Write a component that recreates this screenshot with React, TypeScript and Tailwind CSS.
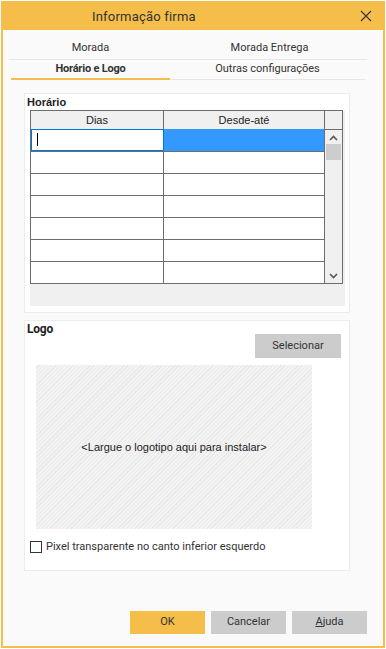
import React from "react";

export default function App() {
  const rows = [0, 1, 2, 3, 4, 5, 6];
  return (
    <div className="w-[386px] h-[649px] bg-white relative" style={{ fontFamily: "Roboto, 'Noto Sans', sans-serif" }}>
      <div className="absolute left-[1px] top-[1px] w-[384px] h-[647px] border-2 border-[#f5bd4a] bg-[#fafafa] flex flex-col">
        {/* Title bar */}
        <div className="h-[29px] -mt-[2px] bg-[#f5bd4a] relative flex items-center shrink-0">
          <div className="pl-[89px] pt-[2px] text-[13px] text-[#333] tracking-[0.2px]">Informação firma</div>
          <svg className="absolute left-[357px] top-[9px]" width="12" height="12" viewBox="0 0 12 12">
            <path d="M1 1 L11 11 M11 1 L1 11" stroke="#333" strokeWidth="1.1" />
          </svg>
        </div>
        {/* Tabs */}
        <div className="ml-[6px] w-[358px] mt-[7px] text-[11px] text-[#333]">
          <div className="flex h-[22px] items-center pt-[1px]">
            <div className="w-[163px] text-center">Morada</div>
            <div className="w-[195px] text-center">Morada Entrega</div>
          </div>
          <div className="h-px bg-[#e6e6e6]" />
          <div className="flex h-[18px] items-center ml-[2px]">
            <div className="w-[159px] text-center font-bold tracking-[-0.2px]">Horário e Logo</div>
            <div className="w-[195px] text-center">Outras configurações</div>
          </div>
          <div className="flex ml-[2px] items-center h-[2px]">
            <div className="w-[159px] h-[2px] bg-[#f5bd4a]" />
            <div className="w-[195px] h-px bg-[#e6e6e6]" />
          </div>
        </div>
        {/* Horario panel */}
        <div className="ml-[21px] mt-[13px] w-[326px] h-[220px] border border-[#ececec] bg-white flex flex-col">
          <div className="text-[11px] font-bold text-[#222] pl-[2px] leading-[14px] mt-[1px]" style={{ fontFamily: "'Liberation Sans', Arial, sans-serif" }}>Horário</div>
          <div className="ml-[5px] mt-[1px] w-[315px] h-[196px] bg-[#f0f0f0]">
            <div className="w-[313px] border border-[#6d6d6d] bg-white" style={{ fontFamily: "'Liberation Sans', Arial, sans-serif" }}>
              <div className="flex h-[19px] bg-[#f0f0f0] text-[11px] text-[#222]">
                <div className="w-[133px] border-r border-[#6d6d6d] flex items-center justify-center border-b">Dias</div>
                <div className="w-[161px] border-r border-[#6d6d6d] flex items-center justify-center border-b">Desde-até</div>
                <div className="flex-1 border-b border-[#6d6d6d]" />
              </div>
              <div className="flex">
                <div className="flex flex-col">
                  {rows.map((r) => (
                    <div key={r} className={"flex " + (r === 6 ? "h-[21px]" : "h-[22px] border-b border-[#6d6d6d]")}>
                      {r === 0 ? (
                        <>
                          <div className="w-[133px] border border-[#0078d7] relative -mt-px">
                            <div className="absolute left-[5px] top-[3px] w-px h-[13px] bg-black" />
                          </div>
                          <div className="w-[161px] bg-[#3399ff] border-r border-[#6d6d6d] -mt-px" />
                        </>
                      ) : (
                        <>
                          <div className="w-[133px] border-r border-[#6d6d6d]" />
                          <div className="w-[161px] border-r border-[#6d6d6d]" />
                        </>
                      )}
                    </div>
                  ))}
                </div>
                <div className="flex-1 bg-[#f0f0f0] flex flex-col items-center">
                  <svg className="mt-[5px]" width="9" height="6" viewBox="0 0 9 6">
                    <path d="M1 5 L4.5 1.5 L8 5" stroke="#555" strokeWidth="1.6" fill="none" />
                  </svg>
                  <div className="mt-[3px] w-[15px] h-[16px] bg-[#cdcdcd]" />
                  <div className="flex-1" />
                  <svg className="mb-[4px]" width="9" height="6" viewBox="0 0 9 6">
                    <path d="M1 1 L4.5 4.5 L8 1" stroke="#555" strokeWidth="1.6" fill="none" />
                  </svg>
                </div>
              </div>
            </div>
          </div>
        </div>
        {/* Logo panel */}
        <div className="ml-[21px] mt-[7px] w-[326px] h-[251px] border border-[#ececec] bg-white flex flex-col">
          <div className="text-[12px] font-bold text-[#222] pl-[2px] leading-[15px] mt-[1px] tracking-[-0.2px]">Logo</div>
          <div className="flex justify-end pr-[8px] -mt-[3px]">
            <div className="w-[86px] h-[24px] bg-[#cccccc] flex items-center justify-center text-[11px] text-[#333]">Selecionar</div>
          </div>
          <div className="ml-[11px] mt-[7px] w-[276px] h-[164px] flex items-center justify-center text-[11px] text-[#222] bg-[repeating-linear-gradient(135deg,#f3f3f3_0px,#f3f3f3_2px,#e9e9e9_2px,#e9e9e9_3px)]" style={{ fontFamily: "'Liberation Sans', Arial, sans-serif" }}>
            &lt;Largue o logotipo aqui para instalar&gt;
          </div>
          <div className="flex items-center mt-[10px] ml-[5px]">
            <div className="w-[12px] h-[12px] border border-[#333] bg-white" />
            <div className="ml-[4px] text-[11px] text-[#333]">Pixel transparente no canto inferior esquerdo</div>
          </div>
        </div>
        {/* Buttons */}
        <div className="flex ml-[127px] mt-[40px] gap-[6px] text-[11px] text-[#333]">
          <div className="w-[75px] h-[23px] bg-[#f5bd4a] flex items-center justify-center">OK</div>
          <div className="w-[75px] h-[23px] bg-[#cccccc] flex items-center justify-center">Cancelar</div>
          <div className="w-[75px] h-[23px] bg-[#cccccc] flex items-center justify-center"><span className="underline">A</span>juda</div>
        </div>
      </div>
    </div>
  );
}
